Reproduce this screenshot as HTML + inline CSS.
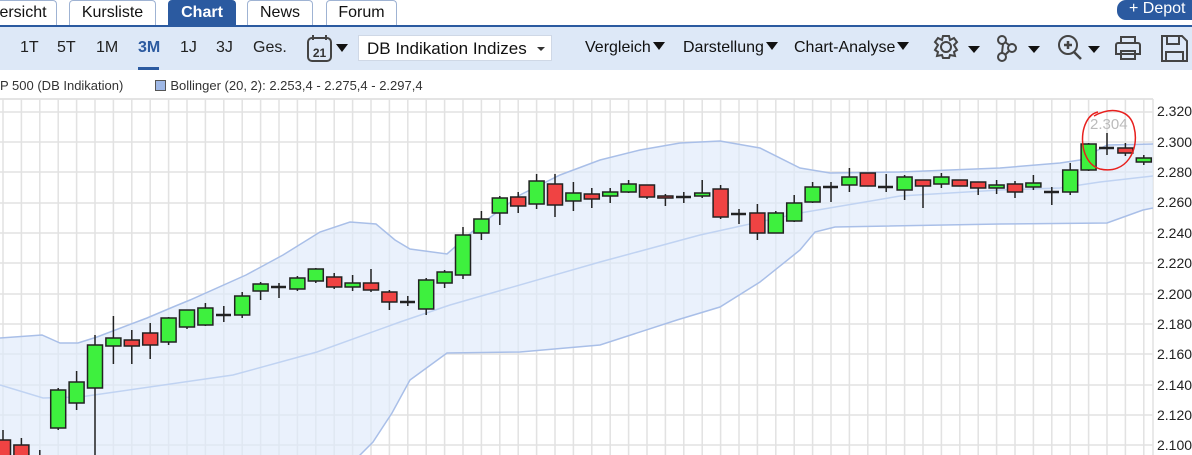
<!DOCTYPE html><html><head><meta charset="utf-8"><style>
body{margin:0;width:1192px;height:455px;overflow:hidden;background:#fff;font-family:"Liberation Sans",Arial,sans-serif;position:relative}
.tab{position:absolute;top:0;height:25px;border:1px solid #9fb3d3;border-bottom:none;border-radius:4px 4px 0 0;background:#fff;font-size:16px;color:#111;text-align:center;line-height:24px;box-sizing:border-box}
.tb{position:absolute;font-size:16px;color:#222;top:39px}
.dd{position:absolute;top:39px;font-size:16px;color:#111}
.tri{display:inline-block;width:0;height:0;border-left:6px solid transparent;border-right:6px solid transparent;border-top:8px solid #111;margin-left:2px;vertical-align:2px}
.yl{position:absolute;left:1157px;font-size:14px;color:#222}
</style></head><body>
<div class="tab" style="left:-10px;width:67px;border-left:none">ersicht</div>
<div class="tab" style="left:69px;width:87px">Kursliste</div>
<div class="tab" style="left:168px;width:68px;background:#2b5aa0;border-color:#2b5aa0;color:#fff;font-weight:bold">Chart</div>
<div class="tab" style="left:247px;width:66px">News</div>
<div class="tab" style="left:326px;width:71px">Forum</div>
<div style="position:absolute;left:1117px;top:0;width:90px;height:20px;background:#2b5aa0;border-radius:9px 0 0 9px;color:#fff;font-size:16px;line-height:17px;padding-left:12px;box-sizing:border-box">+ Depot</div>
<div style="position:absolute;left:0;top:25px;width:1192px;height:2px;background:#2b5aa0"></div>
<div style="position:absolute;left:0;top:27px;width:1192px;height:43px;background:#dde8f7"></div>
<div class="tb" style="left:20px">1T</div><div class="tb" style="left:57px">5T</div><div class="tb" style="left:96px">1M</div>
<div class="tb" style="left:138px;color:#2b5aa0;font-weight:bold">3M</div>
<div style="position:absolute;left:138px;top:67px;width:21px;height:3px;background:#2b5aa0"></div>
<div class="tb" style="left:180px">1J</div><div class="tb" style="left:216px">3J</div><div class="tb" style="left:253px">Ges.</div>
<svg style="position:absolute;left:306px;top:34px" width="46" height="30"><rect x="2" y="4" width="23" height="23" rx="4" fill="none" stroke="#444" stroke-width="2"/><line x1="7" y1="1" x2="7" y2="6" stroke="#444" stroke-width="2"/><line x1="20" y1="1" x2="20" y2="6" stroke="#444" stroke-width="2"/><text x="13.5" y="23" font-size="12" font-weight="bold" text-anchor="middle" fill="#333" font-family="Liberation Sans">21</text><path d="M30 10 h12 l-6 8z" fill="#111"/></svg>
<div style="position:absolute;left:358px;top:35px;width:194px;height:26px;background:#fff;border:1px solid #cfd8e6;box-sizing:border-box;font-size:17px;line-height:25px;padding-left:8px;color:#111">DB Indikation Indizes <span style="position:absolute;right:6px;top:11px;border-left:4px solid transparent;border-right:4px solid transparent;border-top:4px solid #333"></span></div>
<div class="dd" style="left:585px">Vergleich<span class="tri"></span></div>
<div class="dd" style="left:683px">Darstellung<span class="tri"></span></div>
<div class="dd" style="left:794px">Chart-Analyse<span class="tri"></span></div>
<svg style="position:absolute;left:930px;top:32px" width="262" height="34" fill="none" stroke="#444" stroke-width="2">
<g transform="translate(16,15)"><path d="M-3,-11 L3,-11 L4,-7 L8,-9 L11,-5 L8,-2 L11,3 L8,5 L9,9 L4,8 L3,11 L-3,11 L-4,8 L-9,9 L-8,5 L-11,3 L-8,-2 L-11,-5 L-8,-9 L-4,-7Z"/><circle r="5"/></g>
<path d="M38 14h12l-6 7z" fill="#111" stroke="none"/>
<circle cx="72" cy="8" r="4"/><circle cx="82" cy="16" r="4"/><circle cx="72" cy="25" r="4"/><path d="M73 12 L72 21 M75 10 L79 13 M75 23 L79 19"/>
<path d="M98 14h12l-6 7z" fill="#111" stroke="none"/>
<circle cx="138" cy="13" r="9"/><path d="M144 20 L151 27 M138 9v8 M134 13h8" stroke-width="2.5"/>
<path d="M158 14h12l-6 7z" fill="#111" stroke="none"/>
<path d="M191 10v-5h14v5 M188 11h20a2 2 0 0 1 2 2v9h-24v-9a2 2 0 0 1 2-2z M191 19h14v8h-14z"/>
<path d="M232 4h20l5 5v20h-25z M237 4v8h12v-8 M236 29v-9h17v9"/>
</svg>
<div style="position:absolute;left:0;top:78px;font-size:13px;color:#333;white-space:nowrap">P 500 (DB Indikation)<span style="display:inline-block;width:9px;height:9px;background:#9fb8e6;border:1px solid #555;margin:0 4px 0 32px;vertical-align:-1px"></span>Bollinger (20, 2): 2.253,4 - 2.275,4 - 2.297,4</div>
<svg style="position:absolute;left:0;top:0" width="1192" height="455">
<defs><clipPath id="c"><rect x="0" y="99" width="1153" height="356"/></clipPath></defs>
<rect x="0" y="98" width="1153" height="2" fill="#e4e4e4"/>
<g stroke="#e2e2e2" stroke-width="1.5">
<path d="M0 112H1153M0 142H1153M0 172H1153M0 203H1153M0 233H1153M0 263H1153M0 294H1153M0 324H1153M0 354H1153M0 385H1153M0 415H1153M0 445H1153"/>
<path d="M3 99V455M21.4 99V455M39.8 99V455M58.2 99V455M76.6 99V455M95 99V455M113.4 99V455M131.8 99V455M150.2 99V455M168.6 99V455M187 99V455M205.4 99V455M223.8 99V455M242.2 99V455M260.6 99V455M279 99V455M297.4 99V455M315.8 99V455M334.2 99V455M352.6 99V455M371 99V455M389.4 99V455M407.8 99V455M426.2 99V455M444.6 99V455M463 99V455M481.4 99V455M499.8 99V455M518.2 99V455M536.6 99V455M555 99V455M573.4 99V455M591.8 99V455M610.2 99V455M628.6 99V455M647 99V455M665.4 99V455M683.8 99V455M702.2 99V455M720.6 99V455M739 99V455M757.4 99V455M775.8 99V455M794.2 99V455M812.6 99V455M831 99V455M849.4 99V455M867.8 99V455M886.2 99V455M904.6 99V455M923 99V455M941.4 99V455M959.8 99V455M978.2 99V455M996.6 99V455M1015 99V455M1033.4 99V455M1051.8 99V455M1070.2 99V455M1088.6 99V455M1107 99V455M1125.4 99V455M1143.8 99V455M1153 99V455"/>
</g>
<g clip-path="url(#c)">
<polygon fill="#dfe9fb" fill-opacity="0.65" points="0,338 42,335 60,343 78,343 97,337 147,318 173,307 190,300 246,275 283,255 320,232 350,222 376,224 395,240 410,249 447,254 480,225 520,195 560,175 600,160 640,150 680,143 720,141 760,148 800,168 830,173 900,172 1000,168 1060,163 1080,160 1107,145 1153,144 1153,208 1143,210 1107,223 1000,224 835,227 815,232 800,250 760,282 720,307 677,320 600,345 520,352 447,353 410,380 392,413 373,442 360,455 340,475 0,475"/>
<polyline fill="none" stroke="#a9bfe8" stroke-width="1.5" points="0,338 42,335 60,343 78,343 97,337 147,318 173,307 190,300 246,275 283,255 320,232 350,222 376,224 395,240 410,249 447,254 480,225 520,195 560,175 600,160 640,150 680,143 720,141 760,148 800,168 830,173 900,172 1000,168 1060,163 1080,160 1107,145 1153,144"/>
<polyline fill="none" stroke="#a9bfe8" stroke-width="1.5" points="1153,208 1143,210 1107,223 1000,224 835,227 815,232 800,250 760,282 720,307 677,320 600,345 520,352 447,353 410,380 392,413 373,442 360,455 340,475"/>
<polyline fill="none" stroke="#c0d3f2" stroke-width="1.5" points="0,385 43,398 80,397 233,375 317,352 400,322 450,305 600,262 700,235 800,213 900,196 1000,190 1060,188 1100,182 1153,176"/>
<g stroke="#222" stroke-width="1.5">
<path d="M3 430V460M21.4 438V460M39.8 450V460M58.2 388V430M76.6 371V410M95 335V460M113.4 316V364M131.8 330V364M150.2 323V359M168.6 317V345M187 310V329M205.4 303V326M223.8 306V322M242.2 292V318M260.6 282V300M279 283V298M297.4 276V291M315.8 268V283M334.2 273V289M352.6 275V291M371 269V292M389.4 290V310M407.8 296V306M426.2 278V315M444.6 270V288M463 227V279M481.4 211V240M499.8 196V225M518.2 192V213M536.6 174V209M555 174V217M573.4 182V211M591.8 188V208M610.2 188V203M628.6 180V193M647 185V199M665.4 194V206M683.8 192V203M702.2 180V198M720.6 185V219M739 209V224M757.4 204V240M775.8 211V233M794.2 195V222M812.6 182V203M831 182V202M849.4 168V192M867.8 173V186M886.2 174V192M904.6 175V200M923 180V208M941.4 173V188M959.8 180V186M978.2 182V195M996.6 180V194M1015 181V198M1033.4 175V190M1051.8 187V205M1070.2 163V195M1088.6 143V171M1107 133V155M1125.4 143V156M1143.8 155V165"/>
<g stroke-width="2.5"><path d="M32 460H47M216 315H231M271 287H286M400 302H415M676 197H691M731 214H746M823 187H838M878 187H893M1044 192H1059M1099 148H1114"/></g>
<g fill="#3ef03e">
<rect x="50.7" y="390" width="15" height="38"/><rect x="69.1" y="382" width="15" height="21"/><rect x="87.5" y="345" width="15" height="43"/><rect x="105.9" y="338" width="15" height="8"/><rect x="161.1" y="318" width="15" height="24"/><rect x="179.5" y="310" width="15" height="17"/><rect x="197.9" y="308" width="15" height="17"/><rect x="234.7" y="296" width="15" height="19"/><rect x="253.1" y="284" width="15" height="7"/><rect x="289.9" y="278" width="15" height="11"/><rect x="308.3" y="269" width="15" height="12"/><rect x="345.1" y="283" width="15" height="4"/><rect x="418.7" y="280" width="15" height="29"/><rect x="437.1" y="272" width="15" height="11"/><rect x="455.5" y="235" width="15" height="40"/><rect x="473.9" y="219" width="15" height="14"/><rect x="492.3" y="198" width="15" height="15"/><rect x="529.1" y="181" width="15" height="23"/><rect x="565.9" y="193" width="15" height="8"/><rect x="602.7" y="192" width="15" height="4"/><rect x="621.1" y="184" width="15" height="8"/><rect x="694.7" y="193" width="15" height="3"/><rect x="768.3" y="213" width="15" height="20"/><rect x="786.7" y="203" width="15" height="18"/><rect x="805.1" y="187" width="15" height="15"/><rect x="841.9" y="177" width="15" height="8"/><rect x="897.1" y="177" width="15" height="13"/><rect x="933.9" y="177" width="15" height="7"/><rect x="989.1" y="185" width="15" height="3"/><rect x="1025.9" y="183" width="15" height="4"/><rect x="1062.7" y="170" width="15" height="22"/><rect x="1081.1" y="144" width="15" height="26"/><rect x="1136.3" y="158" width="15" height="4"/>
</g>
<g fill="#f04343">
<rect x="-4.5" y="440" width="15" height="20"/><rect x="13.9" y="445" width="15" height="15"/><rect x="124.3" y="340" width="15" height="6"/><rect x="142.7" y="333" width="15" height="12"/><rect x="326.7" y="277" width="15" height="10"/><rect x="363.5" y="283" width="15" height="7"/><rect x="381.9" y="292" width="15" height="10"/><rect x="510.7" y="197" width="15" height="9"/><rect x="547.5" y="184" width="15" height="21"/><rect x="584.3" y="194" width="15" height="5"/><rect x="639.5" y="185" width="15" height="12"/><rect x="657.9" y="196" width="15" height="2"/><rect x="713.1" y="189" width="15" height="28"/><rect x="749.9" y="213" width="15" height="20"/><rect x="860.3" y="173" width="15" height="13"/><rect x="915.5" y="180" width="15" height="6"/><rect x="952.3" y="180" width="15" height="6"/><rect x="970.7" y="182" width="15" height="6"/><rect x="1007.5" y="184" width="15" height="8"/><rect x="1117.9" y="148" width="15" height="5"/>
</g>
</g>
</g>
<text x="1090" y="129" font-size="15" fill="#bbb" font-family="Liberation Sans">2.304</text>
<path d="M1098 112 C1078 116 1076 162 1100 169 C1126 175 1140 150 1134 127 C1130 110 1112 106 1094 116" fill="none" stroke="#e8201e" stroke-width="1.5"/>
</svg>
<div class="yl" style="top:103px">2.320</div><div class="yl" style="top:134px">2.300</div><div class="yl" style="top:164px">2.280</div><div class="yl" style="top:194px">2.260</div><div class="yl" style="top:225px">2.240</div><div class="yl" style="top:255px">2.220</div><div class="yl" style="top:286px">2.200</div><div class="yl" style="top:316px">2.180</div><div class="yl" style="top:346px">2.160</div><div class="yl" style="top:377px">2.140</div><div class="yl" style="top:407px">2.120</div><div class="yl" style="top:437px">2.100</div>
</body></html>
